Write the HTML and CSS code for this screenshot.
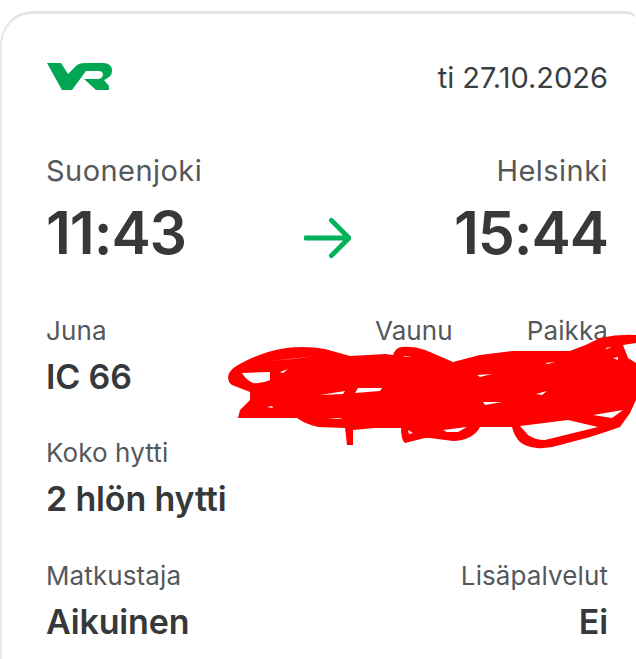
FILE: index.html
```html
<!DOCTYPE html>
<html lang="fi">
<head>
  <meta charset="UTF-8">
  <meta name="viewport" content="width=device-width, initial-scale=1.0">
  <title>Lippu</title>
  <link rel="stylesheet" href="styles.css">
</head>
<body>
  <div class="card">
    <div class="row header">
      <svg class="logo" viewBox="0 0 66 30" aria-label="VR">
        <path d="M0 1H14L21 12L30 3Q33 1 38 1H56Q65 1 65 9Q65 15 57 18L62 24V28H49L37 17H52Q56 16 56 12Q55 9 52 9H39L25 28H15Z"/>
      </svg>
      <div class="date">ti 27.10.2026</div>
    </div>

    <div class="row stations">
      <div class="label-big">Suonenjoki</div>
      <div class="label-big">Helsinki</div>
    </div>
    <div class="row times">
      <div class="time">11:43</div>
      <svg class="arrow" viewBox="0 0 48 44">
        <path d="M2 22H45M28 4L46 22L28 40"/>
      </svg>
      <div class="time">15:44</div>
    </div>

    <div class="row train">
      <div class="field">
        <div class="label">Juna</div>
        <div class="value">IC 66</div>
      </div>
      <div class="seat-labels">
        <div class="label">Vaunu</div>
        <div class="label">Paikka</div>
      </div>
    </div>

    <div class="field cabin">
      <div class="label">Koko hytti</div>
      <div class="value">2 hlön hytti</div>
    </div>

    <div class="row traveller">
      <div class="field">
        <div class="label">Matkustaja</div>
        <div class="value">Aikuinen</div>
      </div>
      <div class="field right">
        <div class="label">Lisäpalvelut</div>
        <div class="value">Ei</div>
      </div>
    </div>
  </div>

  <!-- scribble drawn over the seat numbers -->
  <svg class="scribble" viewBox="0 0 636 659">
    <path class="fill" d="M228 377Q229 370 238 365Q252 357 268 352Q285 347 302 347Q315 347 325 349L350 356L385 354L393 355Q396 347 402 347Q414 346 425 350L430 352L453 362L480 355L513 351L570 351Q585 346 600 338Q618 334 636 335V400L630 413L620 427Q606 432 590 437L560 445Q548 449 537 448Q526 447 520 442Q514 436 512 427L480 427Q477 433 470 437Q462 441 453 441L430 438L425 438L405 443Q401 440 401 428L375 428L353 430L353 445H347L345 428L318 427Q305 424 297 418L238 418L240 410L250 400V392L232 385Q228 382 228 377Z"/>
    <path class="gap" d="M242 373L270 372L270 380Q262 384 253 383Q246 380 242 373Z"/>
    <path class="gap" d="M270 361L318 356L292 359Z"/>
    <path class="gap" d="M280 372L288 369L283 373Z"/>
    <path class="gap" d="M267 407L272 406L273 408Z"/>
    <path class="gap" d="M320 395L345 391L343 394Z"/>
    <path class="gap" d="M355 393L358 388L382 388L380 391Z"/>
    <path class="gap" d="M403 356L412 357L405 357Z"/>
    <path class="gap" d="M408 430L413 433L409 434Z"/>
    <path class="gap" d="M328 418L343 418L338 419Z"/>
    <path class="gap" d="M520 426L568 420L598 427L545 440Q535 440 528 435Z"/>
    <path class="gap" d="M593 415L623 410L612 418Z"/>
    <path class="gap" d="M483 402L502 402L485 405Z"/>
    <path class="gap" d="M536 394L547 391L542 395Z"/>
    <path class="gap" d="M443 430L467 427L458 432L447 432Z"/>
    <path class="gap" d="M477 375L492 374L480 377Z"/>
    <path class="gap" d="M545 363L555 362L548 364Z"/>
    <path class="gap" d="M623 345L636 343V363L628 358Z"/>
    <path class="gap" d="M605 348L612 347L607 349Z"/>
    <path class="gap" d="M613 358L618 357V360Z"/>
  </svg>
</body>
</html>
```

FILE: styles.css
```css
body {
  margin: 0;
  width: 636px;
  height: 659px;
  overflow: hidden;
  position: relative;
  background-color: #ffffff;
  font-family: Inter, "Liberation Sans", sans-serif;
  color: #55585b;
}

.card {
  box-sizing: border-box;
  height: 648px;
  margin-top: 11px;
  padding: 47px 28px 0 44px;
  background-color: #ffffff;
  border-top: 3px solid #e4e4e4;
  border-left: 2px solid #e8e8e8;
  border-radius: 32px 11px 0 0 / 34px 7px 0 0;
}

.row {
  display: flex;
  justify-content: space-between;
}

.header {
  align-items: center;
  height: 32px;
}

.logo {
  width: 66px;
  height: 30px;
  margin-left: 1px;
  fill: #00a651;
}

.date {
  font-size: 29px;
  color: #3c3f42;
}

.stations {
  margin-top: 62px;
}

.label-big {
  font-size: 29px;
  line-height: 32px;
  letter-spacing: 0.45px;
}

.times {
  align-items: center;
  margin-top: 11px;
}

.time {
  font-size: 59px;
  line-height: 70px;
  font-weight: 600;
  letter-spacing: -1.1px;
  color: #36383a;
}

.arrow {
  width: 47px;
  height: 44px;
  margin-top: 9px;
  margin-left: 14px;
  fill: none;
  stroke: #00b259;
  stroke-width: 5;
  stroke-linecap: round;
  stroke-linejoin: round;
}

.train {
  margin-top: 48px;
}

.seat-labels {
  display: flex;
  gap: 74px;
}

.field {
  display: flex;
  flex-direction: column;
  gap: 13px;
}

.right {
  text-align: right;
}

.label {
  font-size: 26px;
  line-height: 30px;
  letter-spacing: 0.1px;
}

.value {
  font-size: 34px;
  line-height: 36px;
  font-weight: 600;
  letter-spacing: -0.15px;
  color: #36383a;
}

.cabin {
  margin-top: 43px;
}

.traveller {
  margin-top: 44px;
}

.scribble {
  position: absolute;
  left: 0;
  top: 0;
  width: 636px;
  height: 659px;
}

.scribble .fill {
  fill: #fe0000;
}

.scribble .gap {
  fill: #ffffff;
}
```
